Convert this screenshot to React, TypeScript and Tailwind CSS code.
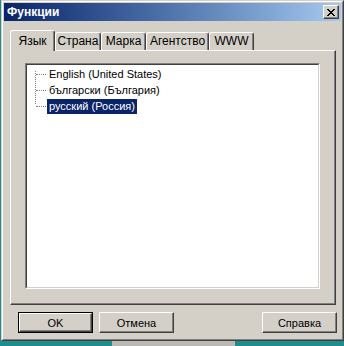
import React from 'react';

const font = { fontFamily: '"Liberation Sans", "DejaVu Sans", Arial, sans-serif' };

const raised =
  'border border-t-white border-l-white border-r-[#404040] border-b-[#404040] shadow-[inset_-1px_-1px_0_#808080]';

const Tab = ({ label, active, w }: { label: string; active?: boolean; w: string }) => (
  <div
    className={`${w} relative flex items-start justify-center rounded-t-[3px] border-l border-t border-r border-l-white border-t-white border-r-[#404040] bg-[#d4d0c8] shadow-[inset_-1px_0_0_#808080] ${
      active ? 'z-10 -mb-[1px] h-[21px] pt-[3px]' : 'h-[18px] pt-[1px]'
    }`}
  >
    <span className="text-[12px] leading-[14px] text-black">{label}</span>
  </div>
);

const Button = ({ label, isDefault, className = '' }: { label: string; isDefault?: boolean; className?: string }) => (
  <div className={`h-[21px] w-[75px] ${isDefault ? 'border border-black' : ''} ${className}`}>
    <div className={`flex h-full w-full items-center justify-center bg-[#d4d0c8] ${raised}`}>
      <span className="text-[11px] leading-[14px] text-black">{label}</span>
    </div>
  </div>
);

const items = ['English (United States)', 'български (България)', 'русский (Россия)'];

export default function App() {
  return (
    <div className="relative h-[346px] w-[344px] overflow-hidden bg-[#1f8d8d]" style={font}>
      {/* window */}
      <div className="ml-[1px] h-[341px] w-[343px] border border-t-[#d4d0c8] border-l-[#d4d0c8] border-r-[#404040] border-b-[#404040] bg-[#d4d0c8]">
        <div className="h-full w-full border border-t-white border-l-white border-r-[#808080] border-b-[#808080] p-[1px]">
          {/* title bar */}
          <div className="flex h-[18px] items-center justify-between bg-gradient-to-r from-[#0a246a] to-[#a6caf0] pl-[3px] pr-[2px]">
            <span className="text-[12px] font-bold leading-[14px] text-white">Функции</span>
            <div className={`flex h-[14px] w-[16px] items-center justify-center bg-[#d4d0c8] ${raised}`}>
              <svg width="8" height="7" viewBox="0 0 8 7" shapeRendering="crispEdges">
                <path d="M0 0h2v1H0zM6 0h2v1H6zM1 1h2v1H1zM5 1h2v1H5zM2 2h4v1H2zM3 3h2v1H3zM2 4h4v1H2zM1 5h2v1H1zM5 5h2v1H5zM0 6h2v1H0zM6 6h2v1H6z" fill="#000" />
              </svg>
            </div>
          </div>

          {/* tabs */}
          <div className="ml-[6px] mt-[9px] flex items-end">
            <Tab label="Язык" active w="w-[45px]" />
            <Tab label="Страна" w="w-[46px]" />
            <Tab label="Марка" w="w-[45px]" />
            <Tab label="Агентство" w="w-[63px]" />
            <Tab label="WWW" w="w-[45px]" />
          </div>

          {/* panel */}
          <div className="ml-[6px] h-[255px] w-[326px] border border-t-white border-l-white border-r-[#404040] border-b-[#404040] pl-[14px] pt-[12px] shadow-[inset_-1px_-1px_0_#808080]">
            <div className="h-[226px] w-[295px] border border-t-[#808080] border-l-[#808080] border-r-white border-b-white">
              <div className="relative h-full w-full border border-t-[#404040] border-l-[#404040] border-r-[#d4d0c8] border-b-[#d4d0c8] bg-white pt-[1px]">
                {/* tree lines */}
                <div className="absolute left-[8px] top-[6px] h-[33px] border-l border-dotted border-[#808080]" />
                {items.map((t, i) => (
                  <div key={t} className="flex h-[16px] items-center">
                    <div className="ml-[9px] w-[10px] border-t border-dotted border-[#808080]" />
                    <span
                      className={`ml-[1px] px-[2px] text-[11px] leading-[15px] ${
                        i === 2 ? 'bg-[#0a246a] text-white' : 'text-black'
                      }`}
                    >
                      {t}
                    </span>
                  </div>
                ))}
              </div>
            </div>
          </div>

          {/* buttons */}
          <div className="ml-[14px] mt-[7px] flex">
            <Button label="OK" isDefault />
            <Button label="Отмена" className="ml-[6px]" />
            <Button label="Справка" className="ml-auto mr-[4px]" />
          </div>
        </div>
      </div>
      {/* desktop strip below window */}
      <div className="ml-[112px] h-[5px] w-[123px] bg-[#b8b8b4]" />
    </div>
  );
}
